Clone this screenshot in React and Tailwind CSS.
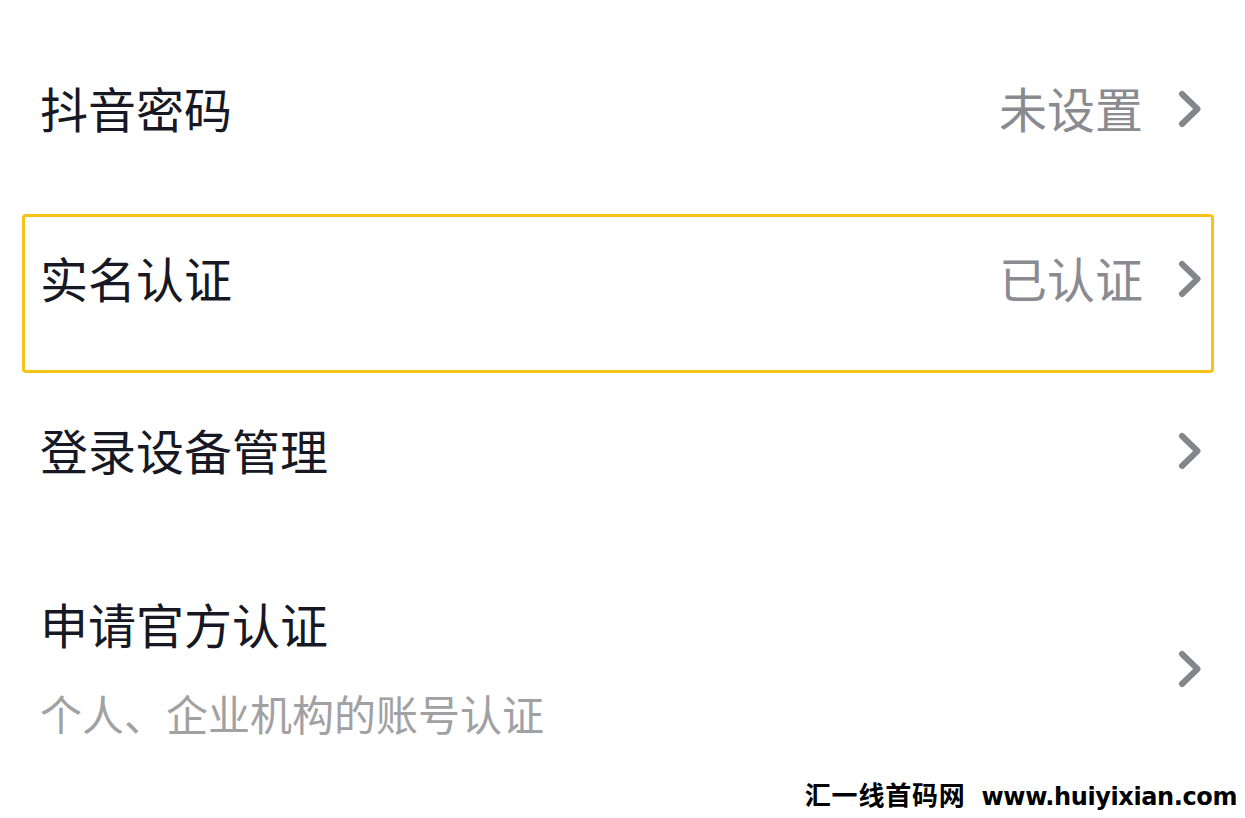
const cjk = { fontFamily: '"Noto Sans CJK SC", "Noto Sans", sans-serif' };

function Chevron() {
  return (
    <svg width="24" height="38" viewBox="0 0 24 38" className="shrink-0">
      <polyline points="4,4 19.5,19 4,34" fill="none" stroke="#85868b" strokeWidth="6" strokeLinecap="round" strokeLinejoin="round" />
    </svg>
  );
}

function Row({ title, value }) {
  return (
    <div className="flex items-center h-[96px] pl-[40px] pr-[43px]">
      <span className="text-[48px] leading-none text-[#161823] -translate-y-[2px]">{title}</span>
      <div className="ml-auto flex items-center">
        {value && <span className="text-[48px] leading-none text-[#8a8b90] mr-[35px] -translate-y-[2px]">{value}</span>}
        <Chevron />
      </div>
    </div>
  );
}

export default function App() {
  return (
    <div className="relative w-[1245px] h-[818px] bg-white overflow-hidden" style={cjk}>
      <div className="flex flex-col pt-[61px]">
        <Row title="抖音密码" value="未设置" />

        {/* highlighted row */}
        <div className="mt-[57px] mx-[22px] w-[1192px] h-[159px] border-[3px] border-[#f7c318] rounded-[4px] pt-[14px]">
          <div className="flex items-center h-[96px] pl-[15px] pr-[9px]">
            <span className="text-[48px] leading-none text-[#161823] -translate-y-[2px]">实名认证</span>
            <div className="ml-auto flex items-center">
              <span className="text-[48px] leading-none text-[#8a8b90] mr-[35px] -translate-y-[2px]">已认证</span>
              <Chevron />
            </div>
          </div>
        </div>

        <div className="mt-[30px]">
          <Row title="登录设备管理" />
        </div>

        <div className="mt-[96px] flex items-center pl-[40px] pr-[43px]">
          <div className="flex flex-col">
            <span className="text-[48px] leading-[56px] text-[#161823]">申请官方认证</span>
            <span className="mt-[37px] text-[42px] leading-[50px] text-[#a1a1a4]">个人、企业机构的账号认证</span>
          </div>
          <div className="ml-auto translate-y-[2px]">
            <Chevron />
          </div>
        </div>
      </div>

      {/* watermark */}
      <div className="absolute right-[8px] bottom-[9px] flex items-baseline font-bold text-black leading-none">
        <span className="text-[26px] tracking-[0.8px]">汇一线首码网</span>
        <span className="ml-[16px] text-[24px] tracking-[-0.4px]" style={{ fontFamily: '"DejaVu Sans", sans-serif' }}>www.huiyixian.com</span>
      </div>
    </div>
  );
}
